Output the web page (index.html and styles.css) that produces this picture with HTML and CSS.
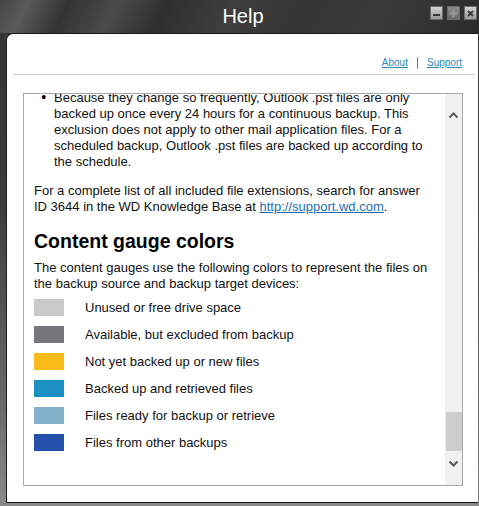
FILE: index.html
```html
<!DOCTYPE html>
<html>
<head>
<meta charset="utf-8">
<link rel="stylesheet" href="styles.css">
</head>
<body>
<div class="window">
  <div class="titlebar">
    <div class="spacer"></div>
    <div class="title">Help</div>
    <div class="winbtns">
      <span class="wbtn"><svg width="11" height="11" viewBox="0 0 11 11"><rect x="2" y="6" width="7" height="2" fill="#3a3a3a"/></svg></span>
      <span class="wbtn dim"><svg width="11" height="11" viewBox="0 0 11 11"><rect x="2" y="4.5" width="7" height="2" fill="#9a9a9a"/><rect x="4.5" y="2" width="2" height="7" fill="#9a9a9a"/></svg></span>
      <span class="wbtn"><svg width="11" height="11" viewBox="0 0 11 11"><path d="M3 3 L8 8 M8 3 L3 8" stroke="#3a3a3a" stroke-width="1.8"/></svg></span>
    </div>
  </div>
  <div class="body-row">
    <div class="panel">
      <div class="links">
        <a class="toplink" href="#">About</a>
        <span class="sep"></span>
        <a class="toplink" href="#">Support</a>
      </div>
      <div class="rule"></div>
      <div class="box">
        <div class="content">
          <ul class="bullets">
            <li>Because they change so frequently, Outlook .pst files are only backed up once every 24 hours for a continuous backup. This exclusion does not apply to other mail application files. For a scheduled backup, Outlook .pst files are backed up according to the schedule.</li>
          </ul>
          <p class="para first">For a complete list of all included file extensions, search for answer ID 3644 in the WD Knowledge Base at <a class="inlink" href="#">http://support.wd.com</a>.</p>
          <h2 class="heading">Content gauge colors</h2>
          <p class="para second">The content gauges use the following colors to represent the files on the backup source and backup target devices:</p>
          <div class="legend">
            <div class="row"><span class="sw c1"></span><span class="lbl">Unused or free drive space</span></div>
            <div class="row"><span class="sw c2"></span><span class="lbl">Available, but excluded from backup</span></div>
            <div class="row"><span class="sw c3"></span><span class="lbl">Not yet backed up or new files</span></div>
            <div class="row"><span class="sw c4"></span><span class="lbl">Backed up and retrieved files</span></div>
            <div class="row"><span class="sw c5"></span><span class="lbl">Files ready for backup or retrieve</span></div>
            <div class="row"><span class="sw c6"></span><span class="lbl">Files from other backups</span></div>
          </div>
        </div>
        <div class="scrollbar">
          <div class="arrow up"><svg width="11" height="8" viewBox="0 0 11 8"><path d="M1.5 6.5 L5.5 2.5 L9.5 6.5" fill="none" stroke="#5a5a5a" stroke-width="2"/></svg></div>
          <div class="track"><div class="thumb"></div></div>
          <div class="arrow down"><svg width="11" height="8" viewBox="0 0 11 8"><path d="M1.5 1.5 L5.5 5.5 L9.5 1.5" fill="none" stroke="#5a5a5a" stroke-width="2"/></svg></div>
        </div>
      </div>
    </div>
  </div>
</div>
</body>
</html>
```
FILE: styles.css
```css
html, body {
  margin: 0;
  padding: 0;
}
body {
  width: 479px;
  height: 506px;
  overflow: hidden;
  background: #3a3a3a;
  font-family: "Liberation Sans", Arial, sans-serif;
}
.window {
  width: 479px;
  height: 506px;
  display: flex;
  flex-direction: column;
  background: linear-gradient(180deg, #333 0%, #3c3c3c 40%, #6a6a6a 80%, #8a8a8a 100%);
}
.titlebar {
  height: 33px;
  flex: none;
  display: grid;
  grid-template-columns: 1fr auto 1fr;
  align-items: start;
  background:
    linear-gradient(118deg, #454545 0%, #5a5a5a 6%, #333 14%, #4a4a4a 24%, #2f2f2f 34%, #3e3e3e 48%, #343434 62%, #3a3a3a 78%, #2b2b2b 100%);
}
.title {
  color: #fff;
  font-size: 20px;
  line-height: 33px;
  padding-left: 7px;
}
.winbtns {
  justify-self: end;
  display: flex;
  gap: 4px;
  padding-top: 6px;
  padding-right: 2px;
}
.wbtn {
  width: 11px;
  height: 12px;
  display: flex;
  align-items: center;
  justify-content: center;
  background: linear-gradient(180deg, #d2d2d2, #9a9a9a);
  border: 1px solid #6a6a6a;
}
.wbtn.dim {
  background: linear-gradient(180deg, #8a8a8a, #6a6a6a);
}
.body-row {
  flex: 1;
  display: flex;
  padding-left: 6px;
}
.panel {
  width: 472px;
  height: 470px;
  box-sizing: border-box;
  background: #fff;
  border: 1px solid #1a1a1a;
  border-right: none;
  border-top-left-radius: 7px;
  padding-top: 22px;
  display: flex;
  flex-direction: column;
}
.links {
  display: flex;
  justify-content: flex-end;
  align-items: center;
  height: 12px;
  padding-right: 16px;
  margin-top: 1px;
}
.toplink {
  font-size: 10px;
  line-height: 12px;
  color: #2a88b8;
  text-decoration: underline;
}
.sep {
  width: 1px;
  height: 12px;
  background: #3a8cc0;
  margin: 0 9px;
}
.rule {
  height: 1px;
  background: #c8c8c8;
  margin: 5px 4px 0 6px;
}
.box {
  margin: 18px 0 0 16px;
  width: 440px;
  height: 393px;
  box-sizing: border-box;
  border: 1px solid #a8a8a8;
  display: flex;
}
.content {
  flex: 1;
  overflow: hidden;
  padding: 0 12px 0 10px;
  font-size: 13px;
  line-height: 16px;
  color: #111;
}
.bullets {
  margin: -5px 0 0 0;
  padding-left: 20px;
}
.bullets li::marker {
  content: "\2022\00a0\00a0";
  font-size: 14px;
  color: #000;
}
.para {
  margin: 0;
}
.para.first {
  margin-top: 13px;
}
.inlink {
  color: #1f6db8;
  text-decoration: underline;
}
.heading {
  margin: 14px 0 0 0;
  font-size: 19.5px;
  line-height: 24px;
  font-weight: bold;
  color: #000;
}
.para.second {
  margin-top: 7px;
}
.legend {
  margin-top: 7px;
  display: flex;
  flex-direction: column;
  gap: 10px;
}
.row {
  display: flex;
  align-items: center;
  gap: 21px;
  height: 17px;
}
.sw {
  width: 30px;
  height: 17px;
  flex: none;
}
.c1 { background: #c9c9c9; }
.c2 { background: #76777c; }
.c3 { background: #f8bb1a; }
.c4 { background: #1c90c2; }
.c5 { background: #80b1c8; }
.c6 { background: #2452aa; }
.lbl {
  line-height: 17px;
}
.scrollbar {
  width: 17px;
  flex: none;
  background: #f0f0f0;
  display: flex;
  flex-direction: column;
}
.arrow {
  height: 17px;
  display: flex;
  align-items: center;
  justify-content: center;
}
.arrow.up {
  margin-top: 12px;
}
.track {
  flex: 1;
  display: flex;
  flex-direction: column;
  justify-content: flex-end;
  padding-bottom: 4px;
}
.thumb {
  height: 39px;
  margin: 0 0 0 1px;
  background: #cdcdcd;
}
.arrow.down {
  margin-bottom: 13px;
}
```
